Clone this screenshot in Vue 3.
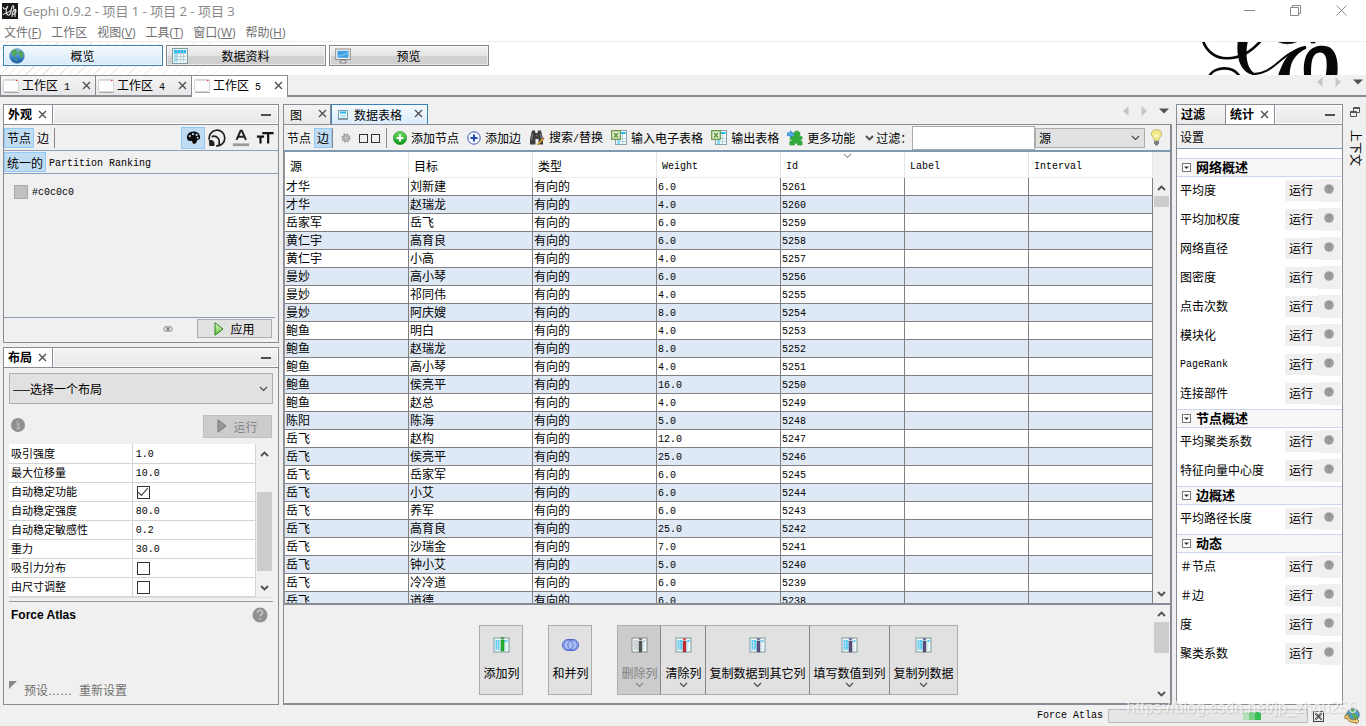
<script setup>
import { ref } from 'vue'

const menus = [
  ['文件', 'F'], ['工作区', ''], ['视图', 'V'], ['工具', 'T'], ['窗口', 'W'], ['帮助', 'H']
]
const modes = [
  { label: '概览', icon: 'globe', active: true },
  { label: '数据资料', icon: 'grid', active: false },
  { label: '预览', icon: 'monitor', active: false }
]
const workspaces = [1, 4, 5]
const properties = [
  ['吸引强度', '1.0'], ['最大位移量', '10.0'], ['自动稳定功能', true], ['自动稳定强度', '80.0'],
  ['自动稳定敏感性', '0.2'], ['重力', '30.0'], ['吸引力分布', false], ['由尺寸调整', false]
]
const edges = [
  ['才华', '刘新建', '6.0'], ['才华', '赵瑞龙', '4.0'], ['岳家军', '岳飞', '6.0'], ['黄仁宇', '高育良', '6.0'],
  ['黄仁宇', '小高', '4.0'], ['曼妙', '高小琴', '6.0'], ['曼妙', '祁同伟', '4.0'], ['曼妙', '阿庆嫂', '8.0'],
  ['鲍鱼', '明白', '4.0'], ['鲍鱼', '赵瑞龙', '8.0'], ['鲍鱼', '高小琴', '4.0'], ['鲍鱼', '侯亮平', '16.0'],
  ['鲍鱼', '赵总', '4.0'], ['陈阳', '陈海', '5.0'], ['岳飞', '赵构', '12.0'], ['岳飞', '侯亮平', '25.0'],
  ['岳飞', '岳家军', '6.0'], ['岳飞', '小艾', '6.0'], ['岳飞', '养军', '6.0'], ['岳飞', '高育良', '25.0'],
  ['岳飞', '沙瑞金', '7.0'], ['岳飞', '钟小艾', '5.0'], ['岳飞', '冷冷道', '6.0'], ['岳飞', '道德', '6.0']
].map((r, i) => ({ source: r[0], target: r[1], weight: r[2], id: 5261 - i }))
const columnTools = [
  { label: '删除列', bar: '#555', disabled: true },
  { label: '清除列', bar: '#d8262c' },
  { label: '复制数据到其它列', bar: '#5b4c86' },
  { label: '填写数值到列', bar: '#5b4c86' },
  { label: '复制列数据', bar: '#5b4c86' }
]
const stats = [
  { title: '网络概述', items: ['平均度', '平均加权度', '网络直径', '图密度', '点击次数', '模块化', 'PageRank', '连接部件'] },
  { title: '节点概述', items: ['平均聚类系数', '特征向量中心度'] },
  { title: '边概述', items: ['平均路径长度'] },
  { title: '动态', items: ['＃节点', '＃边', '度', '聚类系数'] }
]
const filterText = ref('')
</script>

<template>
  <div class="app">
    <svg class="defs" aria-hidden="true">
      <linearGradient id="gGreen" x1="0" y1="0" x2="0" y2="1"><stop offset="0" stop-color="#6fdc60" /><stop offset="1" stop-color="#0a9418" /></linearGradient>
      <linearGradient id="gBlue" x1="0" y1="0" x2="0" y2="1"><stop offset="0" stop-color="#7cc8f5" /><stop offset="1" stop-color="#1259a5" /></linearGradient>
      <linearGradient id="gPlay" x1="0" y1="0" x2="0" y2="1"><stop offset="0" stop-color="#eaffd0" /><stop offset="1" stop-color="#5cbf2e" /></linearGradient>
      <symbol id="x" viewBox="0 0 9 9"><path d="M1 1l7 7M8 1L1 8" stroke="#505050" stroke-width="1.4" fill="none" /></symbol>
      <symbol id="up" viewBox="0 0 9 6"><path d="M1 5l3.500-3.500L8 5" stroke="#505050" stroke-width="1.800" fill="none" /></symbol>
      <symbol id="down" viewBox="0 0 9 6"><path d="M1 1l3.500 3.500L8 1" stroke="#505050" stroke-width="1.800" fill="none" /></symbol>
      <symbol id="thin" viewBox="0 0 9 6"><path d="M1 1l3.500 3.500L8 1" stroke="#444" stroke-width="1.100" fill="none" /></symbol>
      <symbol id="faint" viewBox="0 0 9 6"><path d="M1 1l3.500 3.500L8 1" stroke="#999" stroke-width="1.100" fill="none" /></symbol>
      <symbol id="win" viewBox="0 0 16 14"><rect x=".5" y=".5" width="15" height="12" rx="1" fill="#fdfdfd" stroke="#d4d4d8" /><path d="M1 1.500h14" stroke="#ddd" /><path d="M13 1.500h1.500" stroke="#e33" /><path d="M1 13.500h15" stroke="#aaa" /></symbol>
      <symbol id="globe" viewBox="0 0 16 16"><circle cx="8" cy="8" r="7.300" fill="url(#gBlue)" stroke="#3776a8" stroke-width=".6" /><path d="M2 4c1-2 4-3 6-2L7.500 4 9 5 7 6.500 6 9 4 8 3.500 6zM9.500 3l3 0 2 4-1 2-1.500 1-1-3-2-1zM6 10l2.500 1-1.500 3z" fill="#57a557" /></symbol>
      <symbol id="grid" viewBox="0 0 16 16"><rect x=".5" y=".5" width="15" height="15" fill="#eef7f8" stroke="#819c9e" /><rect x="2" y="2" width="12" height="3" fill="#22bdf5" /><rect x="2" y="5" width="3" height="9" fill="#9be3fc" /><path d="M5.500 2v12M8.500 2v12M11.500 2v12M2 5.500h12M2 8.500h12M2 11.500h12" stroke="#a8c3ca" stroke-width=".7" /></symbol>
      <symbol id="monitor" viewBox="0 0 16 16"><rect x=".7" y="1" width="14.600" height="10.500" fill="#f4f4f4" stroke="#8d8b88" /><rect x="2.500" y="2.800" width="11" height="7" fill="#3d9ee0" /><path d="M3 7q5-1 10-3v2q-5 3-10 3z" fill="#63b8ec" /><path d="M6 12h4v1h1v2H5v-2h1z" fill="#ddd" stroke="#777" stroke-width=".8" /></symbol>
      <symbol id="help" viewBox="0 0 16 16"><circle cx="8" cy="8" r="7.500" fill="#909090" /><path d="M5.500 6.300c0-4 5-3.800 5-.8 0 2-2.400 2-2.400 3.800M8 11v1.800" fill="none" stroke="#c4c4c4" stroke-width="1.700" /></symbol>
      <symbol id="q" viewBox="0 0 10 10"><circle cx="5" cy="5" r="4.800" fill="#9e9e9e" /><path d="M3.500 4c0-2.200 3-2.200 3-.5C6.500 4.700 5 4.700 5 6M5 7v1" fill="none" stroke="#858585" /></symbol>
      <symbol id="sheet" viewBox="0 0 16 16"><rect x="4.500" y=".5" width="11" height="14" fill="#f4fbfd" stroke="#8aa0aa" /><rect x="10" y="2" width="4.500" height="2" fill="#23b8f1" /><path d="M11.500 4v10M6 8.500h9M6 11.500h9M8.500 9v5" stroke="#b4d8e2" /><rect x="6" y="10" width="3" height="4" fill="#8ddaf7" /><rect x=".7" y=".7" width="8.600" height="8.600" fill="#e5efdb" stroke="#62933c" stroke-width="1.200" /><path d="M3 3l4 4.500M7 3L3 7.500" stroke="#5d9437" stroke-width="1.400" /></symbol>
      <symbol id="plus" viewBox="0 0 14 14"><circle cx="7" cy="7" r="6.600" fill="url(#gGreen)" stroke="#168a1b" stroke-width=".6" /><path d="M7 3.500v7M3.500 7h7" stroke="#fff" stroke-width="2.200" /></symbol>
      <symbol id="plusb" viewBox="0 0 14 14"><circle cx="7" cy="7" r="6.200" fill="#f7f9ff" stroke="#3b59b8" stroke-width="1" /><path d="M7 3.500v7M3.500 7h7" stroke="#2448b8" stroke-width="2" /></symbol>
      <symbol id="binoc" viewBox="0 0 16 16"><path d="M3 .5h3L6.500 3h2L9 .5h3l2 8.500v5.500H9.500V9h-3v5.500H1V9z" fill="#42403f" /><path d="M3.500 4l-1 6M11.500 4l1 5M7 5h1" stroke="#8b8987" /><path d="M8 14.500L14 8l1 1-6 6z" fill="#f4cf3a" stroke="#a96f16" stroke-width=".5" /><path d="M13.500 8.500l1-1 1 1-1 1z" fill="#e33" /></symbol>
      <symbol id="puzzle" viewBox="0 0 17 17"><path d="M4 7h4c-2-3 0-6 2.500-6S15 4 13 7h3v3c-2-1-3 2 0 2v4h-5c1-3-4-3-3 0H3v-4c3 0 3-3 0-2z" fill="#32ad3b" stroke="#2a9832" stroke-width=".7" /><path d="M.5 3h3V.8L8 4.500 3.500 8V6H.5z" fill="#4cadf0" stroke="#1d6fae" stroke-width=".6" /></symbol>
      <symbol id="bulb" viewBox="0 0 13 17"><path d="M6.500.7c-6 0-6 5.500-3.500 7.500 1 1 1.300 2 1.300 3.500h4.400c0-1.500.3-2.500 1.300-3.500 2.500-2 2.500-7.500-3.500-7.500z" fill="#f2ea86" stroke="#b5a95e" stroke-width=".8" /><path d="M4.500 5l1 3 1-2 1 2 1-3" stroke="#fff" fill="none" stroke-width=".8" /><path d="M4 12h5v3H4z" fill="#7e8384" /><path d="M5 15.800h3" stroke="#444" /></symbol>
      <symbol id="left" viewBox="0 0 6 10"><path d="M5.500 0v10L0 5z" fill="#c6c6c6" /></symbol>
      <symbol id="right" viewBox="0 0 6 10"><path d="M.5 0v10L6 5z" fill="#c6c6c6" /></symbol>
      <symbol id="drop" viewBox="0 0 10 6"><path d="M0 .5h10L5 5.500z" fill="#505050" /></symbol>
    </svg>

    <header class="titlebar">
      <svg class="appicon" viewBox="0 0 16 16"><rect width="16" height="16" fill="#161616" /><path d="M1 4c1 4 4 1 5-1-2 3-3 8 0 9s3-6 4-8c1-3 3-1 1 2M1 12c2-3 5-1 8-5M10 14c0-7 4-10 4-6s-3 3-3 3M13 7v7" fill="none" stroke="#e4e4e4" stroke-width="1.100" /></svg>
      <h1>Gephi 0.9.2 - 项目 1 - 项目 2 - 项目 3</h1>
      <div class="wincontrols">
        <button aria-label="最小化"><svg viewBox="0 0 11 11"><path d="M0 5.500h11" stroke="#888" /></svg></button>
        <button aria-label="还原"><svg viewBox="0 0 11 11"><path d="M.5 2.500h8v8h-8zM2.500 2.500v-2h8v8h-2" fill="none" stroke="#888" /></svg></button>
        <button aria-label="关闭"><svg viewBox="0 0 11 11"><path d="M.5.5l10 10M10.500.5l-10 10" stroke="#888" /></svg></button>
      </div>
    </header>
    <nav class="menubar">
      <button v-for="m in menus" :key="m[0]">{{ m[0] }}<template v-if="m[1]">(<u>{{ m[1] }}</u>)</template></button>
    </nav>

    <div class="banner">
      <button v-for="m in modes" :key="m.label" class="mode" :class="{ active: m.active }">
        <svg><use :href="'#' + m.icon" /></svg><span>{{ m.label }}</span>
      </button>
      <svg class="logo" viewBox="100 125 430 100" fill="none" stroke="#060808">
        <path d="M113 120C135 190 225 195 290 120" stroke-width="8" />
        <path d="M262 222C330 226 350 152 425 143" stroke-width="6" />
        <path d="M219 120C214 165 222 222 275 226V221C245 212 240 160 250 120Z" fill="#060808" stroke="none" />
        <path d="M426 137C375 140 353 190 340 230H376C376 190 388 165 426 145Z" fill="#060808" stroke="none" />
        <path d="M420 230C414 165 435 136 476 136C515 136 526 175 520 230H485C492 185 489 157 468 157C443 157 440 190 441 230Z" fill="#060808" stroke="none" />
        <path d="M132 230C145 198 205 195 225 230" stroke-width="8" />
        <path d="M338 123Q370 138 400 123Z" fill="#060808" stroke-width="2" />
        <path d="M440 127h14" stroke-width="4" />
      </svg>
    </div>

    <div class="workspaces">
      <div v-for="w in workspaces" :key="w" class="wtab" :class="{ on: w === 5 }">
        <svg class="i16"><use href="#win" /></svg>
        <span class="wname">工作区<span class="m">&nbsp;{{ w }}</span></span>
        <button class="close" aria-label="关闭工作区"><svg><use href="#x" /></svg></button>
      </div>
      <div class="nav"><svg class="arr"><use href="#left" /></svg><svg class="arr"><use href="#right" /></svg><svg class="tri"><use href="#drop" /></svg></div>
    </div>

    <main>
      <aside class="left">
        <section class="panel look">
          <div class="head">
            <div class="ptab on"><b>外观</b><button class="close" aria-label="关闭外观"><svg><use href="#x" /></svg></button></div>
            <div class="fill"><button class="min" aria-label="最小化外观"></button></div>
          </div>
          <div class="bar top">
            <button class="tg on">节点</button><button class="tg">边</button><i class="sep"></i>
            <div class="looktools">
              <button class="on" aria-label="颜色"><svg viewBox="0 0 16 16"><path d="M8 1.500C3.500 1.500 1 4.500 1 8c0 3 2 4 3.500 3.500S7 12 7 13.500s2 1.500 3.500.5S11 11 13 10.500s2.300-1.500 2-3.500C14.600 3.500 11.500 1.500 8 1.500z" fill="#0b0b0b" /><g fill="#c0dcf3"><circle cx="4" cy="6.500" r="1.200" /><circle cx="7.500" cy="4.300" r="1.200" /><circle cx="11.300" cy="5.300" r="1.200" /><circle cx="12.500" cy="8.300" r="1" /></g></svg></button>
              <button aria-label="大小"><svg viewBox="0 0 20 20" fill="none" stroke="#222" stroke-width="1.900"><path d="M1.500 12A8.700 8.700 0 1 1 9 18.700" /><path d="M4 8.500c6-2 10 3 8 9.500" /><path d="M1 12.500c5-1 7 2 6 6.500H1.500z" fill="#222" stroke="none" /></svg></button>
              <button aria-label="标签颜色"><svg viewBox="0 0 20 20"><path d="M5 12L9.500 2h1.500l4.500 10M7 8.500h6.500" fill="none" stroke="#222" stroke-width="2.200" /><path d="M1 17.500h18" stroke="#999" stroke-width="3" /></svg></button>
              <button aria-label="标签大小"><svg viewBox="0 0 20 20" fill="none" stroke="#111" stroke-width="2.400"><path d="M7 4.500h12.500M13.500 4v12M1 8.500h8M5 8v8" /></svg></button>
            </div>
          </div>
          <div class="bar modesrow">
            <button class="tg on">统一的</button><button class="tg m">Partition</button><button class="tg m">Ranking</button>
          </div>
          <div class="colorarea"><button class="swatch" aria-label="选择颜色"></button><span class="m">#c0c0c0</span></div>
          <div class="apply">
            <svg class="chain" viewBox="0 0 10 6"><path d="M3 .8h1.500q1 0 1 2.200t-1 2.200H3a2.200 2.200 0 010-4.400zM7 .8H5.500q-1 0-1 2.200t1 2.200H7A2.200 2.200 0 007 .8zM3 3h4" fill="none" stroke="#808080" /></svg>
            <button class="push"><svg viewBox="0 0 10 14"><path d="M1 .8v12.400L9 7z" fill="url(#gPlay)" stroke="#287e1d" /></svg><span>应用</span></button>
          </div>
        </section>

        <section class="panel layout">
          <div class="head">
            <div class="ptab on"><b>布局</b><button class="close" aria-label="关闭布局"><svg><use href="#x" /></svg></button></div>
            <div class="fill"><button class="min" aria-label="最小化布局"></button></div>
          </div>
          <div class="layoutbody">
            <div class="selwrap">
              <select aria-label="布局"><option>──选择一个布局</option></select>
              <svg><use href="#thin" /></svg>
            </div>
            <div class="runrow">
              <svg class="i14" viewBox="0 0 14 14"><circle cx="7" cy="7" r="7" fill="#8f8f8f" /><path d="M5.500 6h2v4.500M5 10.500h4.500M6.500 3v1.500" fill="none" stroke="#b8b8b8" stroke-width="1.600" /></svg>
              <button class="push off" disabled><svg viewBox="0 0 10 14"><path d="M1 .8v12.400L9 7z" fill="#999" stroke="#777" /></svg><span>运行</span></button>
            </div>
            <div class="props">
              <table>
                <tbody>
                  <tr v-for="(p, i) in properties" :key="p[0]">
                    <td><label :for="'prop' + i">{{ p[0] }}</label></td>
                    <td><input v-if="typeof p[1] === 'boolean'" :id="'prop' + i" type="checkbox" :checked="p[1]"><input v-else :id="'prop' + i" class="m" type="text" :value="p[1]"></td>
                  </tr>
                </tbody>
              </table>
              <div class="scroll"><svg><use href="#up" /></svg><i class="thumb low"></i><svg><use href="#down" /></svg></div>
            </div>
            <div class="descr">
              <b>Force Atlas</b><svg class="i16"><use href="#help" /></svg>
            </div>
            <div class="presets">
              <svg viewBox="0 0 8 8"><path d="M0 0h8L0 8z" fill="#888" /></svg>
              <button>预设……</button><button>重新设置</button>
            </div>
          </div>
        </section>
      </aside>

      <section class="center">
        <div class="ctabs">
          <div class="ctab"><span>图</span><button class="close" aria-label="关闭图"><svg><use href="#x" /></svg></button></div>
          <div class="ctab on"><svg class="mini" viewBox="0 0 10 10"><rect x=".5" y=".5" width="9" height="8" fill="#eefaff" stroke="#7d9ea6" /><path d="M2 2.500h6" stroke="#22b5ee" stroke-width="2" /><path d="M2 5.500h6M2 7h6" stroke="#9bd5ec" stroke-width=".8" /><path d="M0 9.500h10" stroke="#8e9899" /></svg><span>数据表格</span><button class="close" aria-label="关闭数据表格"><svg><use href="#x" /></svg></button></div>
          <div class="nav"><svg class="arr"><use href="#left" /></svg><svg class="arr"><use href="#right" /></svg><svg class="tri"><use href="#drop" /></svg></div>
        </div>
        <div class="cbody">
          <div class="ctools">
            <button class="tg">节点</button><button class="tg on">边</button><i class="sep"></i>
            <button class="gear" aria-label="配置"><svg viewBox="0 0 10 10"><circle cx="5" cy="5" r="3.600" fill="#bbb" stroke="#999" stroke-width="1.800" stroke-dasharray="1.800 1" /><circle cx="5" cy="5" r="1.300" fill="#eee" stroke="#888" stroke-width=".6" /></svg></button>
            <button class="boxes" aria-label="显示设置"><i></i><i></i></button><i class="sep"></i>
            <button class="tool a"><svg class="i14"><use href="#plus" /></svg><span>添加节点</span></button>
            <button class="tool"><svg class="i14"><use href="#plusb" /></svg><span>添加边</span></button>
            <button class="tool"><svg class="i16"><use href="#binoc" /></svg><span>搜索<span class="m">/</span>替换</span></button>
            <button class="tool"><svg class="i16"><use href="#sheet" /></svg><span>输入电子表格</span></button>
            <button class="tool"><svg class="i16"><use href="#sheet" /></svg><span>输出表格</span></button>
            <button class="tool more"><svg class="i16"><use href="#puzzle" /></svg><span>更多功能</span><svg class="chev"><use href="#down" /></svg></button>
            <label for="filter">过滤：</label>
            <input id="filter" v-model="filterText" type="text">
            <div class="selwrap src"><select aria-label="过滤列"><option>源</option></select><svg><use href="#thin" /></svg></div>
            <button class="bulb" aria-label="提示"><svg><use href="#bulb" /></svg></button>
          </div>
          <div class="tablearea">
            <div class="tableclip">
              <table class="data">
                <thead>
                  <tr>
                    <th>源</th><th>目标</th><th>类型</th><th class="m">Weight</th>
                    <th class="m sort">Id<svg><use href="#faint" /></svg></th><th class="m">Label</th><th class="m">Interval</th>
                  </tr>
                </thead>
                <tbody>
                  <tr v-for="e in edges" :key="e.id">
                    <td>{{ e.source }}</td><td>{{ e.target }}</td><td>有向的</td><td class="m">{{ e.weight }}</td><td class="m">{{ e.id }}</td><td></td><td></td>
                  </tr>
                </tbody>
              </table>
            </div>
            <div class="scroll big"><svg><use href="#up" /></svg><i class="thumb small"></i><svg><use href="#down" /></svg></div>
          </div>
          <div class="columns">
            <div class="colbuttons">
              <button class="cb"><svg viewBox="0 0 16 16"><rect x=".5" y="1" width="15" height="14" fill="#eefbfd" stroke="#7d9a9c" /><path d="M2 3h4v10H2zM10 3h4v2h-4z" fill="#54caf7" /><path d="M2 6h12M2 9h12M2 12h12M4 3v10M12 3v10" stroke="#bfe3ee" stroke-width=".7" /><rect x="7.500" y="3" width="3" height="11" fill="#26b72e" stroke="#118018" stroke-width=".6" /><path d="M7 .5h4l-2 2z" fill="#118018" /></svg><span>添加列</span></button>
              <button class="cb"><svg viewBox="0 0 16 16"><path d="M5.500 2.500h5a5 5 0 010 11h-5a5 5 0 010-11z" fill="#a9bdf0" stroke="#4a65c8" /><circle cx="6" cy="8" r="4.700" fill="none" stroke="#6380dc" /><circle cx="10" cy="8" r="4.700" fill="none" stroke="#6380dc" /></svg><span>和并列</span></button>
              <div class="group">
                <button v-for="c in columnTools" :key="c.label" class="cb" :disabled="c.disabled">
                  <svg viewBox="0 0 16 16"><rect x=".5" y="1" width="15" height="14" fill="#f1fbfd" :stroke="c.disabled ? '#888' : '#7d9a9c'" /><path d="M2 3h5v10H2zM11 3h3v2h-3z" :fill="c.disabled ? '#ccc' : '#54caf7'" /><path d="M2 6h12M2 9h12M2 12h12M4 3v10M12 3v10" stroke="#c9dfe6" stroke-width=".7" /><rect x="7.500" y="4" width="3" height="11" :fill="c.bar" stroke="#444" stroke-width=".4" /><path d="M6.500 1.500h5l-2.500 2z" :fill="c.bar" /></svg>
                  <span>{{ c.label }}</span><svg class="chev"><use href="#thin" /></svg>
                </button>
              </div>
            </div>
            <div class="scroll big flat"><svg><use href="#up" /></svg><i class="thumb mid"></i><svg><use href="#down" /></svg></div>
          </div>
        </div>
      </section>

      <aside class="panel stats">
        <div class="head">
          <div class="ptab off"><b>过滤</b></div>
          <div class="ptab on"><b>统计</b><button class="close" aria-label="关闭统计"><svg><use href="#x" /></svg></button></div>
          <div class="fill"><button class="min" aria-label="最小化统计"></button></div>
        </div>
        <div class="settings">设置</div>
        <div class="statlist">
          <section v-for="s in stats" :key="s.title">
            <h2><svg viewBox="0 0 9 9"><rect x=".5" y=".5" width="8" height="8" fill="#fff" stroke="#777" /><path d="M2 3.500h5L4.500 6z" fill="#333" /></svg>{{ s.title }}</h2>
            <div v-for="item in s.items" :key="item" class="stat">
              <span :class="{ m: item === 'PageRank' }">{{ item }}</span>
              <button class="run">运行</button>
              <button class="q" :aria-label="item + '帮助'"><svg><use href="#q" /></svg></button>
            </div>
          </section>
        </div>
      </aside>
      <aside class="strip">
        <button aria-label="还原窗口组"><svg viewBox="0 0 10 10"><path d="M3.500 4V.5h6v5h-3M3 1.500h7M.5 4.500h6v5h-6zM0 5.500h7" fill="none" stroke="#555" /></svg></button>
        <button class="side">上下文</button>
      </aside>
    </main>

    <footer>
      <span class="m">Force Atlas</span>
      <div class="progress" role="progressbar" aria-label="Force Atlas"><i></i><i></i><i></i></div>
      <button aria-label="取消任务"><svg class="cancel" viewBox="0 0 11 11"><rect x=".5" y=".5" width="10" height="10" fill="#eee" stroke="#444" /><path d="M2.500 2.500l6 6M8.500 2.500l-6 6" stroke="#333" stroke-width="2" stroke-dasharray="1.200 .6" /></svg></button>
      <button aria-label="更新"><svg class="i16" viewBox="0 0 16 16"><circle cx="9" cy="7" r="6.300" fill="#4d9ac4" stroke="#457" stroke-width=".6" /><path d="M6 2l4-1 1 3-2 2 4 1 1 3-3 2-3-5z" fill="#5fac4f" /><path d="M1 7l5 0-1.500 1.500C6 12 9 12 12 11.500V10l3 3-3 3v-1.500C7 15 4 13 3 10L1 11z" fill="#f1ce7b" stroke="#8c641f" stroke-width=".8" /></svg></button>
      <span class="mark">https://blog.csdn.net/jp_zhou256</span>
    </footer>
  </div>
</template>

<style>
html, body { background: #f0f0f0; overflow: hidden; }
</style>

<style scoped>
* { box-sizing: border-box; }
.app { height: 100vh; min-height: 640px; display: flex; flex-direction: column; background: #f0f0f0; color: #000; font: 12px/16px "Liberation Sans", "Noto Sans CJK SC", sans-serif; overflow: hidden; white-space: nowrap; }
.defs { position: absolute; width: 0; height: 0; }
button { font: inherit; color: inherit; background: none; border: 0; padding: 0; margin: 0; display: flex; align-items: center; }
input, select { font: inherit; color: inherit; margin: 0; border-radius: 0; outline: 0; }
svg { display: block; flex: none; }
.m { font-family: "Liberation Mono", monospace; font-size: 10px; }
.i16 { width: 16px; height: 16px; }
.i14 { width: 14px; height: 14px; }
.sep { width: 1px; height: 20px; background: #888; flex: none; }

.titlebar { height: 22px; background: #fff; display: flex; align-items: center; padding: 0 19px 0 2px; gap: 5px; color: #888; flex: none; }
.titlebar h1 { font: 13px/20px "Open Sans", "Noto Sans CJK SC", sans-serif; margin: 0; }
.appicon { width: 16px; height: 16px; }
.wincontrols { margin-left: auto; padding-bottom: 2px; display: flex; gap: 35px; }
.wincontrols svg { width: 11px; height: 11px; }
.menubar { height: 20px; background: #fff; border-bottom: 1px solid #eee; display: flex; gap: 10px; padding: 2px 0 0 4px; color: #707070; font-family: "Open Sans", "Noto Sans CJK SC", sans-serif; flex: none; }

.banner { height: 33px; flex: none; display: flex; gap: 3px; padding: 3px 25px 0 3px; background: linear-gradient(90deg, #fff0, #fff 300px), repeating-linear-gradient(135deg, #fff 0, #fff 5px, #e2e2e2 5px, #e2e2e2 6px); overflow: hidden; }
.mode { width: 160px; height: 21px; border: 1px solid #85888f; padding-left: 5px; background: linear-gradient(#f2f2f2, #e4e4e4 50%, #d2d2d2 51%, #cfcfcf); box-shadow: inset 0 0 0 1px #fff8; }
.mode.active { border-color: #3c7fb1; background: linear-gradient(#f3f9fd, #e6f2fb 50%, #d8eafa); }
.mode svg { width: 16px; height: 16px; }
.mode span { flex: 1; text-align: center; padding: 2px 22px 0 0; }
.logo { width: 143px; height: 33px; margin: -3px 0 0 auto; }

.workspaces { height: 22px; display: flex; flex: none; border-bottom: 2px solid #898c95; }
.wtab { width: 96px; height: 20px; border: 1px solid #898c95; border-bottom: 0; display: flex; align-items: center; padding: 0 4px 0 2px; gap: 3px; background: linear-gradient(#f4f4f4, #e7e7e7); }
.wtab + .wtab { border-left: 0; }
.wtab.on { background: #fff; height: 22px; padding-bottom: 2px; }
.wtab .i16 { height: 14px; }
.wname { padding-top: 3px; }
.close { margin-left: auto; }
.close svg { width: 9px; height: 9px; }
.nav { margin-left: auto; display: flex; align-items: center; gap: 12px; }
.arr { width: 6px; height: 10px; }
.tri { width: 10px; height: 6px; }
.workspaces .nav { padding: 0 3px 7px 0; }

main { flex: 1; min-height: 0; display: flex; gap: 4px; padding: 7px 0 0 3px; }
.left { width: 276px; flex: none; display: flex; flex-direction: column; gap: 4px; }
.panel { border: 1px solid #898c95; display: flex; flex-direction: column; min-height: 0; }
.head { height: 20px; display: flex; flex: none; border-bottom: 1px solid #898c95; }
.ptab { width: 49px; display: flex; align-items: center; padding: 0 5px 0 4px; border-right: 1px solid #898c95; background: #fff; }
.ptab.off { background: linear-gradient(#f6f6f6, #e9e9e9); }
.ptab b { font-size: 12px; padding-top: 1px; }
.fill { flex: 1; display: flex; align-items: center; justify-content: flex-end; padding-right: 6px; border: 1px solid #fff; background: linear-gradient(#f4f4f4, #e8e8e8); }
.min { width: 10px; height: 2px; background: #505050; }

.look { height: 239px; flex: none; }
.bar { display: flex; align-items: center; flex: none; border-bottom: 1px solid #8ba0b8; }
.top { height: 26px; }
.modesrow { height: 23px; }
.tg { height: 20px; padding: 3px 2px 0; border: 1px solid transparent; }
.tg.on, .looktools .on { background: #c0dcf3; border: 1px solid #90c8f6; }
.top .tg.on { width: 30px; }
.top .tg { width: 20px; }
.looktools { margin-left: auto; display: flex; padding-right: 1px; }
.looktools button { width: 24px; height: 22px; justify-content: center; border: 1px solid transparent; }
.looktools svg { width: 18px; height: 18px; }
.looktools .on svg { width: 15px; height: 15px; }
.colorarea { flex: 1; display: flex; align-items: flex-start; padding: 11px 10px; gap: 4px; line-height: 15px; }
.swatch { width: 14px; height: 14px; background: #c0c0c0; border: 1px solid #aaa; }
.apply { height: 25px; flex: none; border-top: 1px solid #8ba0b8; margin-right: 3px; display: flex; align-items: center; justify-content: flex-end; gap: 24px; padding: 0 3px 3px 0; }
.chain { width: 10px; height: 6px; }
.push { width: 75px; height: 19px; border: 1px solid #adadad; background: #e1e1e1; justify-content: center; gap: 6px; }
.push span { padding-top: 3px; }
.push svg { width: 10px; height: 14px; }
.push.off { width: 69px; height: 23px; background: #ccc; border-color: #bfbfbf; color: #838383; }
.layout { flex: 1; }
.layoutbody { flex: 1; display: flex; flex-direction: column; padding: 5px; min-height: 0; }
.selwrap { display: grid; align-items: center; }
.selwrap select { grid-area: 1 / 1; width: 100%; height: 31px; appearance: none; background: #e1e1e1; border: 1px solid #adadad; padding: 2px 3px 0; }
.selwrap svg { grid-area: 1 / 1; width: 9px; height: 6px; justify-self: end; margin-right: 5px; pointer-events: none; }
.runrow { height: 40px; flex: none; display: flex; justify-content: space-between; align-items: center; padding: 4px 1px 0 2px; }
.runrow .i14 { margin-bottom: 2px; }
.props { height: 154px; flex: none; display: flex; border-bottom: 1px solid #ddd; overflow: hidden; }
.props table { flex: 1; border-collapse: collapse; table-layout: fixed; background: #fff; font-size: 11px; }
.props tr { height: 19px; }
.props td { width: 50%; height: 19px; padding: 1px 2px 0; border-right: 1px solid #d4d4d4; border-bottom: 1px solid #d4d4d4; line-height: 14px; }
.props input[type=text] { width: 100%; height: 16px; border: 0; padding: 1px 1px 0; background: none; display: block; }
.props input[type=checkbox] { width: 13px; height: 13px; margin: 0 2px; appearance: none; border: 1px solid #333; background: #fff; display: grid; place-items: center; }
.props input:checked::after { content: ""; width: 9px; height: 4px; border: solid #333; border-width: 0 0 1px 1px; transform: rotate(-48deg); margin-bottom: 3px; }
.scroll { width: 17px; padding: 7px 1px 6px; display: flex; flex-direction: column; align-items: center; flex: none; }
.scroll svg { width: 9px; height: 6px; }
.thumb { width: 15px; background: #cdcdcd; margin: 0 0 auto; }
.thumb.low { height: 79px; margin-top: 35px; }
.thumb.small { height: 11px; margin-top: 5px; }
.thumb.mid { height: 31px; margin-top: 5px; }
.descr { flex: 1; margin-top: 3px; border-top: 1px solid #999; display: flex; justify-content: space-between; align-items: flex-start; padding: 5px 5px 0 2px; }
.presets { display: flex; gap: 7px; color: #707070; }
.presets button { padding-top: 2px; }
.presets svg { width: 8px; height: 8px; }

.center { flex: 1; min-width: 0; display: flex; flex-direction: column; }
.ctabs { height: 20px; display: flex; flex: none; }
.ctab { width: 48px; border: 1px solid #898c95; border-bottom: 0; display: flex; align-items: center; padding: 0 3px 0 6px; background: linear-gradient(#f4f4f4, #e9e9e9); }
.ctab span { padding-top: 2px; }
.ctab.on { width: 97px; border-color: #3c7fb1; background: linear-gradient(#f5faff, #d9ebfb); padding: 0 4px 0 6px; }
.ctab .close { padding-bottom: 2px; }
.mini { width: 10px; height: 10px; margin-right: 6px; }
.ctabs .nav { padding: 0 3px 6px 0; }
.cbody { flex: 1; min-height: 0; border: 1px solid #898c95; border-right-width: 2px; border-bottom-width: 2px; display: flex; flex-direction: column; }
.ctools { height: 27px; flex: none; display: flex; align-items: center; border-bottom: 2px solid #8099b3; }
.gear { margin-left: 8px; }
.gear svg { width: 10px; height: 10px; }
.boxes { gap: 3px; margin: 2px 6px 0 8px; }
.boxes i { width: 9px; height: 9px; border: 1px solid #333; }
.tool { gap: 4px; margin-right: 8px; flex: none; }
.tool > span, .ctools label { padding-top: 2px; }
.tool.a { margin-left: 6px; }
.tool.more { margin-right: 2px; }
.chev { width: 9px; height: 6px; }
.tool.more .chev { margin-left: 6px; }
.ctools > input { flex: 1; min-width: 0; height: 24px; border: 1px solid #aaa; background: #fff; }
.src { width: 110px; flex: none; }
.src select { height: 20px; }
.bulb { padding: 0 7px 0 5px; }
.bulb svg { width: 13px; height: 17px; }
.tablearea { flex: 1; min-height: 0; display: flex; border-left: 1px solid #999; }
.tableclip { flex: 1; min-width: 0; overflow: hidden; }
.data { width: 100%; table-layout: fixed; border-spacing: 0; }
.data th { height: 26px; padding: 4px 0 0 5px; text-align: left; font-weight: normal; background: #fff; border-right: 1px solid #e5e5e5; border-bottom: 1px solid #eee; position: relative; }
.data td { height: 18px; padding: 2px 1px 0; line-height: 15px; background: #fff; border-right: 1px solid #808080; border-bottom: 1px solid #808080; }
.data tr:nth-child(even) td { background: #dfe9f5; }
.sort svg { position: absolute; top: 1px; left: 50%; width: 9px; height: 6px; }
.scroll.big { width: 17px; padding-top: 33px; }
.scroll.flat { padding-top: 6px; }
.columns { height: 100px; flex: none; display: flex; border-top: 2px solid #898c95; }
.colbuttons { flex: 1; display: flex; justify-content: center; align-items: center; gap: 25px; padding-top: 12px; padding-bottom: 1px; }
.cb { height: 70px; flex-direction: column; padding: 11px 3px 0; border: 1px solid #adadad; background: #e1e1e1; }
.cb svg:first-child { width: 17px; height: 16px; margin-bottom: 13px; }
.cb:disabled { background: #ccc; color: #838383; }
.cb:disabled .chev { opacity: .5; }
.group { display: flex; }
.group .cb { border-left-width: 0; border-right-color: #888; padding-left: 4px; }
.group .cb:first-child { border-left-width: 1px; padding-left: 3px; }
.group .cb:last-child { border-right-color: #adadad; }

.stats { width: 167px; flex: none; }
.settings { height: 24px; flex: none; padding: 5px 3px 0; border-bottom: 1px solid #8099b3; }
.statlist { flex: 1; min-height: 0; overflow: hidden; background: #fff; padding-top: 9px; }
.statlist h2 { height: 19px; margin: 0; padding-left: 5px; display: flex; align-items: center; gap: 5px; font-size: 13px; line-height: 16px; background: #f7f7f7; border: solid #ccd6f4; border-width: 1px 0; }
.statlist h2 svg { width: 9px; height: 9px; }
.stat { height: 29px; display: flex; align-items: center; padding: 0 1px 2px 3px; }
.stat > span { flex: 1; }
.run { width: 33px; height: 21px; background: #f0f0f0; padding-left: 4px; }
.q { width: 23px; height: 23px; background: #f0f0f0; justify-content: center; padding: 0 2px 3px 0; }
.q svg { width: 10px; height: 10px; }
.strip { width: 23px; margin-left: -4px; flex: none; padding: 3px 0 0 7px; }
.strip svg { width: 10px; height: 10px; }
.side { writing-mode: vertical-rl; text-orientation: sideways; margin: 13px 0 0 -3px; }

footer { height: 21px; flex: none; display: flex; align-items: center; justify-content: flex-end; padding: 1px 6px 0 0; position: relative; }
.progress { width: 200px; height: 14px; border: 1px solid #bcbcbc; background: #e6e6e6; margin: 0 5px; display: flex; align-items: center; padding-left: 134px; }
.progress i { width: 6px; height: 8px; background: #b5dfbb; }
.progress i + i { background: #77cf87; }
.progress i + i + i { background: #35bd50; }
.cancel { width: 11px; height: 11px; margin-right: 20px; }
.mark { position: absolute; right: 9px; bottom: 8px; font: 16px/20px "Liberation Sans", sans-serif; color: #ffffffb0; text-shadow: 1px 1px 1px #9996; pointer-events: none; }
</style>
